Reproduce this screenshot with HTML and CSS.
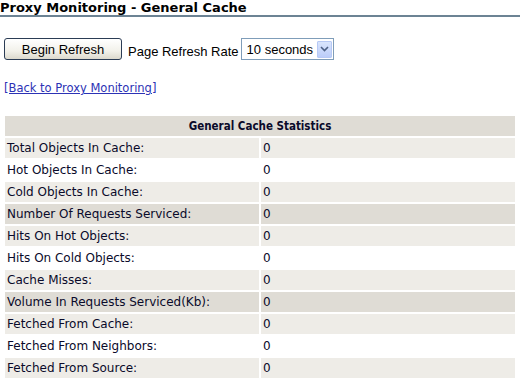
FILE: index.html
```html
<!DOCTYPE html>
<html lang="en">
<head>
    <meta charset="UTF-8">
    <title>Proxy Monitoring - General Cache</title>
    <link rel="stylesheet" href="styles.css">
</head>
<body>
    <h1 class="page-title">Proxy Monitoring - General Cache</h1>

    <div class="content">
        <!-- Refresh controls -->
        <div class="refresh-bar">
            <button type="button" class="btn">Begin Refresh</button>
            <span class="rate-label">Page Refresh Rate</span>
            <div class="select">
                <span class="select-value">10 seconds</span>
                <span class="select-arrow">
                    <svg width="9" height="6" viewBox="0 0 9 6"><path d="M1 1 L4.5 4.5 L8 1" fill="none" stroke="#4d6185" stroke-width="1.6"/></svg>
                </span>
            </div>
        </div>

        <a class="back-link" href="#">[Back to Proxy Monitoring]</a>

        <!-- Statistics table -->
        <table class="stats">
            <tr><th colspan="2">General Cache Statistics</th></tr>
            <tr class="light"><td>Total Objects In Cache:</td><td>0</td></tr>
            <tr class="plain"><td>Hot Objects In Cache:</td><td>0</td></tr>
            <tr class="light"><td>Cold Objects In Cache:</td><td>0</td></tr>
            <tr class="dark"><td>Number Of Requests Serviced:</td><td>0</td></tr>
            <tr class="light"><td>Hits On Hot Objects:</td><td>0</td></tr>
            <tr class="plain"><td>Hits On Cold Objects:</td><td>0</td></tr>
            <tr class="light"><td>Cache Misses:</td><td>0</td></tr>
            <tr class="dark"><td>Volume In Requests Serviced(Kb):</td><td>0</td></tr>
            <tr class="light"><td>Fetched From Cache:</td><td>0</td></tr>
            <tr class="plain"><td>Fetched From Neighbors:</td><td>0</td></tr>
            <tr class="light"><td>Fetched From Source:</td><td>0</td></tr>
        </table>
    </div>
</body>
</html>
```

FILE: styles.css
```css
body {
    margin: 0;
    font-family: "DejaVu Sans", sans-serif;
    font-size: 12px;
    color: #000;
    background: #fff;
}
.page-title {
    margin: 0;
    padding: 1px 0 0 0;
    height: 14px;
    line-height: 14px;
    font-size: 13px;
    font-weight: bold;
    color: #000;
    border-bottom: 2px solid #6c8394;
}
.content {
    padding: 0 3px;
}
.refresh-bar {
    display: flex;
    align-items: center;
    margin-top: 21px;
    margin-left: 1px;
    font-family: "Liberation Sans", Arial, sans-serif;
    font-size: 13px;
}
.btn {
    width: 118px;
    height: 22px;
    padding: 0;
    font-family: "Liberation Sans", Arial, sans-serif;
    font-size: 13px;
    color: #000;
    border: 1px solid #2b3c55;
    border-radius: 3px;
    background: linear-gradient(#ffffff, #f2f1ea 60%, #dcd9cd);
}
.rate-label {
    margin: 4px 0 0 6px;
}
.select {
    display: flex;
    align-items: center;
    width: 91px;
    height: 20px;
    margin-left: 2px;
    border: 1px solid #7f9db9;
    background: #fff;
}
.select-value {
    flex: 1;
    padding-left: 5px;
}
.select-arrow {
    display: flex;
    align-items: center;
    justify-content: center;
    width: 15px;
    height: 17px;
    margin-right: 1px;
    background: linear-gradient(#d9e5fd, #bccdf9);
    border: 1px solid #b7c9f5;
    box-sizing: border-box;
    border-radius: 1px;
}
.back-link {
    display: inline-block;
    margin: 21px 0 0 1px;
    font-size: 11.5px;
    color: #2c32b5;
    text-decoration: underline;
}
.stats {
    width: 100%;
    margin-top: 19px;
    border-spacing: 2px;
    color: #0a0a2a;
}
.stats th {
    height: 20px;
    padding: 0;
    background: #dfdcd5;
    font-family: "DejaVu Sans Condensed", "DejaVu Sans", sans-serif;
    font-size: 11.5px;
    font-weight: bold;
    text-align: center;
}
.stats td {
    width: 50%;
    height: 20px;
    padding: 0 2px;
}
.stats .light td {
    background: #eeece7;
}
.stats .dark td {
    background: #dfdcd5;
}
```
